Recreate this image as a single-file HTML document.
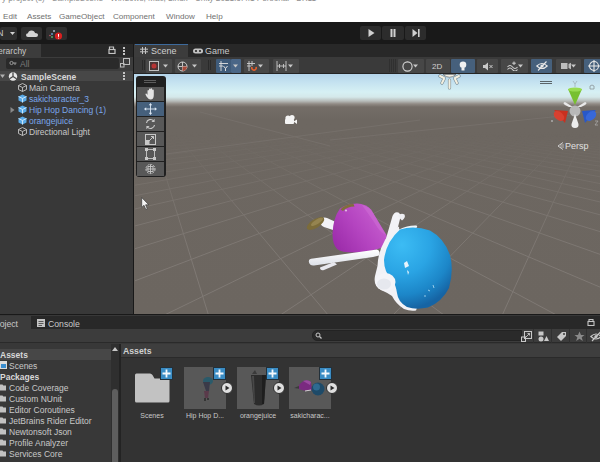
<!DOCTYPE html>
<html><head><meta charset="utf-8">
<style>
*{box-sizing:border-box;margin:0;padding:0}
html,body{width:600px;height:462px;overflow:hidden;background:#191919;font-family:"Liberation Sans",sans-serif;font-size:8.5px;color:#c4c4c4}
.a{position:absolute}
.t{position:absolute;white-space:nowrap;line-height:1}
#title{left:0;top:0;width:600px;height:10px;background:#fff}
#menu{left:0;top:10px;width:600px;height:12px;background:#fff}
#tb{left:0;top:22px;width:600px;height:22px;background:#191919}
.btn{position:absolute;background:#2e2e2e;border-radius:2px}
#hier{left:0;top:44px;width:133px;height:270px;background:#383838}
#scene{left:135px;top:44px;width:465px;height:270px;background:#383838}
#proj{left:0;top:315px;width:600px;height:147px;background:#383838}
</style></head><body>
<div id="title" class="a">
  <div class="t" style="left:2px;top:-5px;color:#909090;font-size:8.2px">y project (s) - SampleScene - Windows, Mac, Linux - Unity 2021.3.4f1 Personal &lt;DX11&gt;</div>
</div>
<div id="menu" class="a">
  <div class="t" style="left:3px;top:2.5px;color:#707070;font-size:8.1px">Edit</div>
  <div class="t" style="left:27px;top:2.5px;color:#707070;font-size:8.1px">Assets</div>
  <div class="t" style="left:59px;top:2.5px;color:#707070;font-size:8.1px">GameObject</div>
  <div class="t" style="left:113px;top:2.5px;color:#707070;font-size:8.1px">Component</div>
  <div class="t" style="left:166px;top:2.5px;color:#707070;font-size:8.1px">Window</div>
  <div class="t" style="left:206px;top:2.5px;color:#707070;font-size:8.1px">Help</div>
</div>
<div id="tb" class="a">
  <div class="btn" style="left:0;top:5px;width:17px;height:13px"></div>
  <div class="t" style="left:-3px;top:7px;color:#c8c8c8;font-size:9px">N</div>
  <svg class="a" style="left:10px;top:10px" width="5" height="3" viewBox="0 0 5 3"><path d="M0 0 H5 L2.5 3Z" fill="#d0d0d0"/></svg>
  <div class="btn" style="left:21px;top:5px;width:21px;height:13px"></div>
  <svg class="a" style="left:26px;top:8px" width="12" height="7" viewBox="0 0 12 7"><path d="M2 7 Q0 7 0 5 Q0 3.2 2 3.2 Q2.5 0.5 5.5 0.5 Q8.5 0.5 9 3 Q12 3 12 5 Q12 7 10 7Z" fill="#d4d4d4"/></svg>
  <div class="btn" style="left:46px;top:5px;width:21px;height:13px"></div>
  <svg class="a" style="left:49px;top:7px" width="14" height="11" viewBox="0 0 14 11"><circle cx="5" cy="2" r="1" fill="#a8b8c8"/><circle cx="3" cy="5" r="1" fill="#6898c8"/><circle cx="3" cy="8" r="1" fill="#58a868"/><circle cx="1" cy="6.5" r="0.8" fill="#c85868"/><circle cx="9.5" cy="7" r="3.6" fill="#d82020"/><path d="M9.5 5 V7.8 M9.5 8.8 V9.5" stroke="#fff" stroke-width="1"/></svg>
  <div class="btn" style="left:360px;top:4px;width:21px;height:14px;background:#2c2c2c"></div>
  <div class="btn" style="left:382px;top:4px;width:22px;height:14px;background:#2c2c2c"></div>
  <div class="btn" style="left:405px;top:4px;width:21px;height:14px;background:#2c2c2c"></div>
  <svg class="a" style="left:368px;top:7px" width="7" height="8" viewBox="0 0 7 8"><path d="M0.5 0 L6.5 4 L0.5 8Z" fill="#d0d0d0"/></svg>
  <svg class="a" style="left:390px;top:7px" width="6" height="8" viewBox="0 0 6 8"><rect x="0.5" y="0" width="2" height="8" fill="#d0d0d0"/><rect x="3.5" y="0" width="2" height="8" fill="#d0d0d0"/></svg>
  <svg class="a" style="left:412px;top:7px" width="8" height="8" viewBox="0 0 8 8"><path d="M0.5 0 L5.5 4 L0.5 8Z" fill="#d0d0d0"/><rect x="6" y="0" width="1.6" height="8" fill="#d0d0d0"/></svg>
</div>
<div id="hier" class="a">
  <div class="a" style="left:0;top:0;width:133px;height:13px;background:#282828"></div>
  <div class="a" style="left:0;top:0;width:41px;height:13px;background:#3c3c3c"></div>
  <div class="t" style="left:-10px;top:3px;color:#c8c8c8">Hierarchy</div>
  <svg class="a" style="left:108px;top:2px" width="8" height="8" viewBox="0 0 8 8"><path d="M1.5 3.5 V1 H5.5 V3.5" fill="none" stroke="#c4c4c4" stroke-width="1.2"/><rect x="1" y="3.5" width="6" height="4" fill="none" stroke="#c4c4c4" stroke-width="1.2"/></svg>
  <div class="a" style="left:123px;top:3px;width:2px;height:2px;background:#c4c4c4"></div>
  <div class="a" style="left:123px;top:6px;width:2px;height:2px;background:#c4c4c4"></div>
  <div class="a" style="left:123px;top:9px;width:2px;height:2px;background:#c4c4c4"></div>
  <div class="a" style="left:0;top:13px;width:133px;height:14px;background:#3c3c3c"></div>
  <div class="a" style="left:6px;top:14px;width:113px;height:11px;background:#2a2a2a;border-radius:2px"></div>
  <div class="t" style="left:20px;top:16px;color:#7a7a7a">All</div>
  <svg class="a" style="left:9px;top:16px" width="8" height="7" viewBox="0 0 8 7"><circle cx="2.5" cy="3" r="1.6" fill="none" stroke="#9a9a9a" stroke-width="1"/><path d="M4 3 H7.5 M6 3 V5" stroke="#9a9a9a" stroke-width="1"/></svg>
  <svg class="a" style="left:120px;top:14px" width="10" height="10" viewBox="0 0 10 10"><rect x="3.5" y="0.5" width="6" height="6" fill="none" stroke="#bdbdbd" stroke-width="1"/><rect x="0.5" y="5.5" width="3.5" height="3.5" fill="none" stroke="#bdbdbd" stroke-width="1"/></svg>
  <div class="a" style="left:0;top:27px;width:133px;height:10px;background:#474747"></div>
  <svg class="a" style="left:0px;top:30px" width="5" height="5" viewBox="0 0 5 5"><path d="M0 0.5 H5 L2.5 4 Z" fill="#b0b0b0"/></svg>
  <svg class="a" style="left:8px;top:28px" width="10" height="9" viewBox="0 0 10 9"><circle cx="5" cy="4.5" r="4.2" fill="#e8e8e8"/><path d="M5 4.5 L5 0.5 M5 4.5 L1.5 6.8 M5 4.5 L8.5 6.8" stroke="#474747" stroke-width="1.3"/></svg>
  <div class="t" style="left:21px;top:29px;color:#d8d8d8;font-weight:bold">SampleScene</div>
  <div class="a" style="left:123px;top:28px;width:2px;height:2px;background:#c4c4c4"></div>
  <div class="a" style="left:123px;top:31px;width:2px;height:2px;background:#c4c4c4"></div>
  <div class="a" style="left:123px;top:34px;width:2px;height:2px;background:#c4c4c4"></div>
<svg class="a" style="left:18px;top:39px" width="9" height="9" viewBox="0 0 9 9"><path d="M4.5 0.5 L8.5 2.5 V6.5 L4.5 8.5 L0.5 6.5 V2.5 Z M0.5 2.5 L4.5 4.5 L8.5 2.5 M4.5 4.5 V8.5" stroke="#c4c4c4" stroke-width="0.9" fill="none"/></svg>
  <div class="t" style="left:29px;top:40px;color:#c8c8c8">Main Camera</div>
<svg class="a" style="left:18px;top:50px" width="9" height="9" viewBox="0 0 9 9"><path d="M4.5 0.5 L8.5 2.5 V6.5 L4.5 8.5 L0.5 6.5 V2.5 Z" fill="#5aaae8"/><path d="M0.5 2.5 L4.5 4.5 L8.5 2.5 M4.5 4.5 V8.5" stroke="#d8ecfa" stroke-width="0.9" fill="none"/></svg>
  <div class="t" style="left:29px;top:51px;color:#7ba7ea">sakicharacter_3</div>
<svg class="a" style="left:18px;top:61px" width="9" height="9" viewBox="0 0 9 9"><path d="M4.5 0.5 L8.5 2.5 V6.5 L4.5 8.5 L0.5 6.5 V2.5 Z" fill="#5aaae8"/><path d="M0.5 2.5 L4.5 4.5 L8.5 2.5 M4.5 4.5 V8.5" stroke="#d8ecfa" stroke-width="0.9" fill="none"/></svg>
  <div class="t" style="left:29px;top:62px;color:#7ba7ea">Hip Hop Dancing (1)</div>
  <svg class="a" style="left:10px;top:63px" width="5" height="6" viewBox="0 0 5 6"><path d="M0.5 0 V6 L4.5 3 Z" fill="#8a8a8a"/></svg>
<svg class="a" style="left:18px;top:72px" width="9" height="9" viewBox="0 0 9 9"><path d="M4.5 0.5 L8.5 2.5 V6.5 L4.5 8.5 L0.5 6.5 V2.5 Z" fill="#5aaae8"/><path d="M0.5 2.5 L4.5 4.5 L8.5 2.5 M4.5 4.5 V8.5" stroke="#d8ecfa" stroke-width="0.9" fill="none"/></svg>
  <div class="t" style="left:29px;top:73px;color:#7ba7ea">orangejuice</div>
<svg class="a" style="left:18px;top:83px" width="9" height="9" viewBox="0 0 9 9"><path d="M4.5 0.5 L8.5 2.5 V6.5 L4.5 8.5 L0.5 6.5 V2.5 Z M0.5 2.5 L4.5 4.5 L8.5 2.5 M4.5 4.5 V8.5" stroke="#c4c4c4" stroke-width="0.9" fill="none"/></svg>
  <div class="t" style="left:29px;top:84px;color:#c8c8c8">Directional Light</div>
</div>
<div id="scene" class="a">
  <div class="a" style="left:0;top:0;width:465px;height:13px;background:#282828"></div>
  <div class="a" style="left:0;top:0;width:53px;height:13px;background:#3c3c3c;border-top:1px solid #3d6a9c"></div>
  <svg class="a" style="left:5px;top:3px" width="8" height="7" viewBox="0 0 8 7"><path d="M2.5 0 V7 M5.5 0 V7 M0 2.2 H8 M0 4.8 H8" stroke="#c4c4c4" stroke-width="1"/></svg>
  <div class="t" style="left:16px;top:3px;color:#d0d0d0;font-size:9px">Scene</div>
  <svg class="a" style="left:58px;top:4px" width="10" height="6" viewBox="0 0 10 6"><rect x="0" y="0.5" width="10" height="5" rx="2.5" fill="#c4c4c4"/><circle cx="3" cy="3" r="1.1" fill="#282828"/><circle cx="7" cy="3" r="1.1" fill="#282828"/></svg>
  <div class="t" style="left:70px;top:3px;color:#c8c8c8;font-size:9px">Game</div>
  <div class="a" style="left:0;top:13px;width:465px;height:17px;background:#3a3a3a;border-bottom:1px solid #242424"></div>
  <div class="a" style="left:7px;top:16px;width:1px;height:10px;background:#2a2a2a"></div>
  <div class="a" style="left:9px;top:16px;width:1px;height:10px;background:#2a2a2a"></div>
  <div class="a" style="left:73px;top:16px;width:1px;height:10px;background:#2a2a2a"></div>
  <div class="a" style="left:75px;top:16px;width:1px;height:10px;background:#2a2a2a"></div>
  <div class="a" style="left:254px;top:15px;width:1px;height:13px;background:#303030"></div>
  <div class="a" style="left:256px;top:15px;width:1px;height:13px;background:#303030"></div>
  <div class="a" style="left:258px;top:15px;width:1px;height:13px;background:#303030"></div>
  <div class="a" style="left:260px;top:15px;width:1px;height:13px;background:#303030"></div>
  <div class="a" style="left:11px;top:15px;width:26px;height:14px;background:#474747;border-radius:1px"></div>
  <div class="a" style="left:40px;top:15px;width:26px;height:14px;background:#474747;border-radius:1px"></div>
  <div class="a" style="left:81px;top:15px;width:15px;height:14px;background:#3f5b7a;border-radius:1px"></div>
  <div class="a" style="left:96px;top:15px;width:10px;height:14px;background:#4a6687;border-radius:1px"></div>
  <div class="a" style="left:109px;top:15px;width:25px;height:14px;background:#474747;border-radius:1px"></div>
  <div class="a" style="left:138px;top:15px;width:26px;height:14px;background:#474747;border-radius:1px"></div>
  <div class="a" style="left:263px;top:15px;width:26px;height:14px;background:#474747;border-radius:1px"></div>
  <div class="a" style="left:291px;top:15px;width:24px;height:14px;background:#474747;border-radius:1px"></div>
  <div class="a" style="left:316px;top:15px;width:24px;height:14px;background:#46607c;border-radius:1px"></div>
  <div class="a" style="left:342px;top:15px;width:21px;height:14px;background:#474747;border-radius:1px"></div>
  <div class="a" style="left:366px;top:15px;width:27px;height:14px;background:#474747;border-radius:1px"></div>
  <div class="a" style="left:396px;top:15px;width:21px;height:14px;background:#46607c;border-radius:1px"></div>
  <div class="a" style="left:421px;top:15px;width:25px;height:14px;background:#474747;border-radius:1px"></div>
  <div class="a" style="left:449px;top:15px;width:20px;height:14px;background:#46607c;border-radius:1px"></div>
  <svg class="a" style="left:14px;top:17px" width="10" height="10" viewBox="0 0 10 10"><rect x="0.5" y="0.5" width="9" height="9" fill="#4a3434" stroke="#c0c0c0" stroke-width="1"/><circle cx="5" cy="5" r="2.5" fill="#b83434"/></svg>
  <svg class="a" style="left:28px;top:20px" width="5" height="4" viewBox="0 0 5 4"><path d="M0 0.5 H5 L2.5 3.5 Z" fill="#c8c8c8"/></svg>
  <svg class="a" style="left:42px;top:17px" width="11" height="11" viewBox="0 0 11 11"><circle cx="5.5" cy="5.5" r="4.5" fill="none" stroke="#d0d0d0" stroke-width="1"/><path d="M1 5.5 H10 M5.5 1 V10" stroke="#d0d0d0" stroke-width="0.9"/><path d="M5.5 5.5 H10 A4.5 4.5 0 0 1 5.5 10 Z" fill="#a84a3a"/></svg>
  <svg class="a" style="left:57px;top:20px" width="5" height="4" viewBox="0 0 5 4"><path d="M0 0.5 H5 L2.5 3.5 Z" fill="#c8c8c8"/></svg>
  <svg class="a" style="left:84px;top:17px" width="9" height="10" viewBox="0 0 9 10"><path d="M2 0 V10 M0 2.5 H9 M0 5 H4" stroke="#e0e0e0" stroke-width="0.9"/><path d="M4.5 5 L6.5 7.5 L8.5 5 M6.5 7.5 V10" stroke="#e0e0e0" stroke-width="1" fill="none"/></svg>
  <svg class="a" style="left:98px;top:20px" width="5" height="4" viewBox="0 0 5 4"><path d="M0 0.5 H5 L2.5 3.5 Z" fill="#c8c8c8"/></svg>
  <svg class="a" style="left:112px;top:17px" width="10" height="10" viewBox="0 0 10 10"><path d="M2 0 V10 M5 0 V5 M0 2.5 H8 M0 5 H4" stroke="#d0d0d0" stroke-width="0.9"/><path d="M5 6 A2.2 2.2 0 1 0 9 6 " stroke="#e8602c" stroke-width="1.6" fill="none"/></svg>
  <svg class="a" style="left:123px;top:20px" width="5" height="4" viewBox="0 0 5 4"><path d="M0 0.5 H5 L2.5 3.5 Z" fill="#c8c8c8"/></svg>
  <svg class="a" style="left:141px;top:17px" width="11" height="10" viewBox="0 0 11 10"><path d="M1 0 V10 M10 0 V10 M1 5 H10 M3.5 3 V7 M7.5 3 V7" stroke="#c8c8c8" stroke-width="0.9"/></svg>
  <svg class="a" style="left:153px;top:20px" width="5" height="4" viewBox="0 0 5 4"><path d="M0 0.5 H5 L2.5 3.5 Z" fill="#c8c8c8"/></svg>
  <svg class="a" style="left:267px;top:17px" width="11" height="11" viewBox="0 0 11 11"><circle cx="5.5" cy="5.5" r="4.6" fill="none" stroke="#d8d8d8" stroke-width="1.1"/><path d="M8.2 2 A4.6 4.6 0 0 1 2 9 A4.2 4.2 0 0 0 8.2 2Z" fill="#d8d8d8"/></svg>
  <svg class="a" style="left:278px;top:20px" width="5" height="4" viewBox="0 0 5 4"><path d="M0 0.5 H5 L2.5 3.5 Z" fill="#c8c8c8"/></svg>
  <div class="t" style="left:297px;top:19px;color:#d0d0d0;font-size:8px">2D</div>
  <svg class="a" style="left:324px;top:17px" width="8" height="10" viewBox="0 0 8 10"><circle cx="4" cy="3.8" r="3.3" fill="#f0f0f0"/><rect x="2.5" y="6.5" width="3" height="3" fill="#f0f0f0"/></svg>
  <svg class="a" style="left:348px;top:18px" width="10" height="9" viewBox="0 0 10 9"><path d="M0 3 H2 L5 0.5 V8.5 L2 6 H0Z" fill="#c8c8c8"/><path d="M6.5 3 L9.5 6 M9.5 3 L6.5 6" stroke="#c8c8c8" stroke-width="1"/></svg>
  <svg class="a" style="left:372px;top:17px" width="11" height="10" viewBox="0 0 11 10"><path d="M0.5 6 Q3 3 5.5 6 T10.5 6 M0.5 8.5 Q3 5.5 5.5 8.5 T10.5 8.5" stroke="#d0d0d0" stroke-width="1.1" fill="none"/><path d="M7 0.5 V4 M5.2 2.2 H8.8" stroke="#d0d0d0" stroke-width="1"/></svg>
  <svg class="a" style="left:383px;top:20px" width="5" height="4" viewBox="0 0 5 4"><path d="M0 0.5 H5 L2.5 3.5 Z" fill="#c8c8c8"/></svg>
  <svg class="a" style="left:401px;top:17px" width="12" height="10" viewBox="0 0 12 10"><path d="M0.8 5 Q6 0 11.2 5 Q6 10 0.8 5Z" fill="none" stroke="#e8e8e8" stroke-width="1.1"/><circle cx="6" cy="5" r="1.6" fill="#e8e8e8"/><path d="M2 9.5 L10.5 0.5" stroke="#e8e8e8" stroke-width="1.1"/></svg>
  <svg class="a" style="left:426px;top:18px" width="10" height="8" viewBox="0 0 10 8"><rect x="0" y="1" width="6.5" height="6" fill="#bcbcbc"/><path d="M7.5 2 L10 0.8 V7.2 L7.5 6Z" fill="#bcbcbc"/></svg>
  <svg class="a" style="left:436px;top:20px" width="5" height="4" viewBox="0 0 5 4"><path d="M0 0.5 H5 L2.5 3.5 Z" fill="#c8c8c8"/></svg>
  <svg class="a" style="left:453px;top:16px" width="12" height="12" viewBox="0 0 12 12"><circle cx="6" cy="6" r="4.5" fill="none" stroke="#e8e8e8" stroke-width="1.1"/><path d="M6 0 V12 M0 6 H12" stroke="#e8e8e8" stroke-width="1.1"/></svg>
  <div class="a" style="left:0;top:30px;width:465px;height:240px;background:linear-gradient(to bottom,#b4d4ea 0px,#c4e2f0 8px,#d6f0f4 18px,#d4e8ea 23px,#b8bcba 27px,#908a84 30px,#746d67 33px,#6d6761 45px,#6c6660 240px)"></div>
<svg class="a" style="left:-135px;top:-44px" width="600" height="462" viewBox="0 0 600 462">
<defs><linearGradient id="gf" x1="0" y1="100" x2="0" y2="314" gradientUnits="userSpaceOnUse"><stop offset="0" stop-color="#fff" stop-opacity="0"/><stop offset="0.16" stop-color="#fff" stop-opacity="0"/><stop offset="0.3" stop-color="#fff" stop-opacity="0.3"/><stop offset="0.51" stop-color="#fff" stop-opacity="0.75"/><stop offset="0.75" stop-color="#fff" stop-opacity="1"/><stop offset="1" stop-color="#fff" stop-opacity="1"/></linearGradient>
<mask id="gm"><rect x="135" y="100" width="465" height="214" fill="url(#gf)"/></mask>
<clipPath id="gc"><rect x="135" y="100" width="465" height="214"/></clipPath></defs>
<g clip-path="url(#gc)" mask="url(#gm)" stroke="#7f7974" stroke-width="1" fill="none"><line x1="-8.0" y1="695.3" x2="137.1" y2="103.0"/><line x1="324.4" y1="691.6" x2="143.2" y2="103.0"/><line x1="650.9" y1="697.7" x2="149.3" y2="103.0"/><line x1="889.6" y1="641.9" x2="155.1" y2="103.1"/><line x1="895.3" y1="496.5" x2="160.8" y2="103.1"/><line x1="628.3" y1="689.7" x2="597.9" y2="114.5"/><line x1="898.5" y1="413.8" x2="166.4" y2="103.1"/><line x1="332.3" y1="690.8" x2="593.1" y2="114.3"/><line x1="895.5" y1="358.7" x2="171.8" y2="103.1"/><line x1="26.4" y1="691.9" x2="588.4" y2="114.1"/><line x1="897.7" y1="322.0" x2="177.1" y2="103.2"/><line x1="-289.7" y1="693.1" x2="583.8" y2="113.8"/><line x1="899.3" y1="294.8" x2="182.3" y2="103.2"/><line x1="-296.2" y1="538.7" x2="579.3" y2="113.6"/><line x1="897.2" y1="273.1" x2="187.3" y2="103.2"/><line x1="-290.2" y1="442.6" x2="574.9" y2="113.4"/><line x1="898.6" y1="256.7" x2="192.2" y2="103.2"/><line x1="-294.4" y1="382.3" x2="570.6" y2="113.2"/><line x1="899.7" y1="243.4" x2="197.0" y2="103.2"/><line x1="-297.4" y1="339.1" x2="566.4" y2="113.0"/><line x1="898.1" y1="231.8" x2="201.7" y2="103.3"/><line x1="-299.6" y1="306.7" x2="562.2" y2="112.8"/><line x1="899.0" y1="222.6" x2="206.3" y2="103.3"/><line x1="-295.9" y1="280.4" x2="558.1" y2="112.6"/><line x1="899.8" y1="214.7" x2="210.8" y2="103.3"/><line x1="-297.8" y1="260.4" x2="554.1" y2="112.4"/><line x1="898.6" y1="207.5" x2="215.1" y2="103.3"/><line x1="-299.4" y1="244.1" x2="550.2" y2="112.2"/><line x1="899.3" y1="201.6" x2="219.4" y2="103.3"/><line x1="-296.7" y1="229.8" x2="546.4" y2="112.0"/><line x1="900.0" y1="196.3" x2="223.6" y2="103.3"/><line x1="-298.1" y1="218.3" x2="542.6" y2="111.8"/><line x1="898.9" y1="191.5" x2="227.7" y2="103.4"/><line x1="-299.3" y1="208.5" x2="538.9" y2="111.6"/><line x1="899.5" y1="187.4" x2="231.7" y2="103.4"/><line x1="-297.1" y1="199.6" x2="535.3" y2="111.4"/><line x1="898.6" y1="183.5" x2="235.6" y2="103.4"/><line x1="-298.3" y1="192.1" x2="531.7" y2="111.2"/><line x1="899.2" y1="180.1" x2="239.4" y2="103.4"/><line x1="-299.3" y1="185.5" x2="528.2" y2="111.1"/><line x1="899.7" y1="177.1" x2="243.2" y2="103.4"/><line x1="-297.4" y1="179.5" x2="524.7" y2="110.9"/><line x1="898.9" y1="174.2" x2="246.8" y2="103.4"/><line x1="-298.4" y1="174.2" x2="521.3" y2="110.7"/><line x1="899.3" y1="171.6" x2="250.4" y2="103.4"/><line x1="-299.2" y1="169.5" x2="518.0" y2="110.6"/><line x1="899.8" y1="169.3" x2="253.9" y2="103.5"/><line x1="-300.0" y1="165.3" x2="514.7" y2="110.4"/><line x1="899.1" y1="167.1" x2="257.4" y2="103.5"/><line x1="-298.4" y1="161.2" x2="511.5" y2="110.2"/><line x1="899.5" y1="165.1" x2="260.8" y2="103.5"/><line x1="-299.2" y1="157.7" x2="508.4" y2="110.1"/><line x1="899.8" y1="163.2" x2="264.1" y2="103.5"/><line x1="-299.8" y1="154.5" x2="505.3" y2="109.9"/><line x1="899.2" y1="161.4" x2="267.4" y2="103.5"/><line x1="-298.5" y1="151.4" x2="502.2" y2="109.8"/><line x1="899.6" y1="159.9" x2="270.5" y2="103.5"/><line x1="-299.1" y1="148.6" x2="499.2" y2="109.6"/><line x1="899.9" y1="158.4" x2="273.7" y2="103.5"/><line x1="-299.7" y1="146.1" x2="496.3" y2="109.5"/><line x1="899.3" y1="156.9" x2="276.7" y2="103.6"/><line x1="-298.5" y1="143.6" x2="493.4" y2="109.3"/><line x1="899.7" y1="155.6" x2="279.8" y2="103.6"/><line x1="-299.1" y1="141.4" x2="490.5" y2="109.2"/><line x1="900.0" y1="154.4" x2="282.7" y2="103.6"/><line x1="-299.7" y1="139.4" x2="487.7" y2="109.1"/><line x1="899.4" y1="153.1" x2="285.6" y2="103.6"/><line x1="-298.6" y1="137.4" x2="484.9" y2="108.9"/><line x1="899.7" y1="152.0" x2="288.5" y2="103.6"/><line x1="-299.1" y1="135.6" x2="482.2" y2="108.8"/><line x1="899.2" y1="150.9" x2="291.3" y2="103.6"/><line x1="-299.6" y1="133.9" x2="479.5" y2="108.7"/><line x1="899.5" y1="150.0" x2="294.0" y2="103.6"/><line x1="-298.6" y1="132.2" x2="476.9" y2="108.5"/><line x1="899.8" y1="149.0" x2="296.7" y2="103.6"/><line x1="-299.1" y1="130.7" x2="474.3" y2="108.4"/><line x1="899.3" y1="148.1" x2="299.4" y2="103.6"/><line x1="-299.5" y1="129.3" x2="471.7" y2="108.3"/><line x1="899.6" y1="147.3" x2="302.0" y2="103.7"/><line x1="-300.0" y1="128.0" x2="469.2" y2="108.1"/><line x1="899.8" y1="146.5" x2="304.5" y2="103.7"/><line x1="-299.1" y1="126.7" x2="466.7" y2="108.0"/><line x1="899.4" y1="145.7" x2="307.0" y2="103.7"/><line x1="-299.5" y1="125.5" x2="464.3" y2="107.9"/><line x1="899.7" y1="144.9" x2="309.5" y2="103.7"/><line x1="-299.9" y1="124.3" x2="461.9" y2="107.8"/><line x1="899.9" y1="144.3" x2="311.9" y2="103.7"/><line x1="-299.1" y1="123.2" x2="459.5" y2="107.7"/><line x1="899.5" y1="143.5" x2="314.3" y2="103.7"/><line x1="-299.4" y1="122.2" x2="457.2" y2="107.5"/></g>
<g stroke="#78726d" stroke-width="1" fill="none" clip-path="url(#gc)" opacity="0.8"><line x1="136" y1="158" x2="420" y2="120"/><line x1="200" y1="112" x2="330" y2="146"/><line x1="330" y1="140" x2="600" y2="112"/></g>
</svg>

<svg class="a" style="left:-135px;top:-44px" width="600" height="462" viewBox="0 0 600 462">
<defs>
<radialGradient id="hb" cx="402" cy="245" r="64" gradientUnits="userSpaceOnUse"><stop offset="0" stop-color="#3cbcf4"/><stop offset="0.45" stop-color="#2aa4e4"/><stop offset="0.78" stop-color="#1c86c8"/><stop offset="1" stop-color="#1664a4"/></radialGradient>
<linearGradient id="mg" x1="335" y1="250" x2="385" y2="215" gradientUnits="userSpaceOnUse"><stop offset="0" stop-color="#9a2aa8"/><stop offset="0.5" stop-color="#b444c0"/><stop offset="1" stop-color="#c860d0"/></linearGradient>
<linearGradient id="wg" x1="0" y1="250" x2="0" y2="268" gradientUnits="userSpaceOnUse"><stop offset="0" stop-color="#ffffff"/><stop offset="1" stop-color="#d8dce4"/></linearGradient>
</defs>
<!-- leg 1 -->
<path d="M322 218.5 Q324 217 327 218 L338 223 L336 231 L324 227 Q320 225 320.5 222Z" fill="#f2f2f6"/>
<!-- shoe 1 -->
<ellipse cx="315.5" cy="223.5" rx="10" ry="4.3" transform="rotate(-32 315.5 223.5)" fill="#7c6c3a"/>
<ellipse cx="317" cy="221.8" rx="7" ry="2.2" transform="rotate(-32 317 221.8)" fill="#958450"/>
<!-- dress -->
<path d="M340 208.5 Q347 204 357 203.5 Q366 204 371 209.5 L386.5 235 Q389 242 381 248 Q370 252 355 252.5 Q341 252.5 337 249 Q332.5 244 332.5 234 Q333 218 340 208.5Z" fill="url(#mg)"/>
<path d="M362 205 Q368 206 372 211 L386 235 Q380 233 374 222Z" fill="#cf70d6" opacity="0.5"/>
<path d="M340.5 209.5 Q345 204 353.5 204 L354.5 206.5 Q347 206.5 343 211Z" fill="#7f6e3c"/>
<circle cx="346" cy="210.5" r="1.1" fill="#e0b8e0"/>
<!-- upper arm -->
<path d="M385 242 L392.5 216 Q394.5 211 398.5 212.5 Q401.5 214.5 400 219 L394 243Z" fill="#f2f2f6"/>
<path d="M397.5 216 Q401 212.5 404.5 214.5 Q406 217.5 402 220.5 Z" fill="#eeeef2"/>
<!-- long arm -->
<path d="M309 262.5 Q308 258.5 313 258.5 L377 249.5 Q381 251 379 255.5 L373 257 L314 265.5 Q310 266 309 262.5Z" fill="url(#wg)"/>
<path d="M320 267.5 L334 262 L337 264.5 L324 270 Q320 271 320 267.5Z" fill="#e8e8ee"/>
<!-- head white -->
<path d="M399 226.5 Q390 232 385 240 Q378 252 377.5 266 Q376 272 375 276 Q373 286 381 290 Q388 293 392 296 Q396 304 404 309 Q410 311.5 416 310.5 L420 300 L400 240Z" fill="#f2f2f6"/>
<path d="M384.5 258 Q386 242 399.5 230.5 Q408 226.5 416 226.8" fill="none" stroke="#eef4f8" stroke-width="2.4" stroke-linecap="round"/>
<!-- blue -->
<path d="M400 229.5 Q414 225 430 230.5 Q444 238 450 255 Q454 270 449 288 Q442 302 428 307.5 Q416 310 407 307 Q398 302 397 293 Q396 285 392 280 Q384 272 384 260 Q386 242 400 229.5Z" fill="url(#hb)"/>
<!-- snout -->
<ellipse cx="385.5" cy="282" rx="10" ry="9" fill="#f4f4f8"/>
<ellipse cx="384" cy="284" rx="7" ry="5.5" fill="#e6e8ee"/>
<path d="M404 263 L407 261 L409 266 L405 268Z M407 270 L409 272 L408 275Z" fill="#e8f4fc"/>
<path d="M428 290 L430 291 M424 296 L426 296 M433 285 L434 288" stroke="#b8e0f4" stroke-width="0.8"/>
</svg>

<div class="a" style="left:1px;top:32px;width:30px;height:101px;background:#202020;border-radius:3px"></div>
<div class="a" style="left:9px;top:36px;width:12px;height:1px;background:#5c5c5c"></div>
<div class="a" style="left:9px;top:38px;width:12px;height:1px;background:#5c5c5c"></div>
<div class="a" style="left:2px;top:43px;width:27px;height:14px;background:#585858"></div>
<div class="a" style="left:2px;top:58px;width:27px;height:14px;background:#46607c"></div>
<div class="a" style="left:2px;top:73px;width:27px;height:14px;background:#585858"></div>
<div class="a" style="left:2px;top:88px;width:27px;height:14px;background:#585858"></div>
<div class="a" style="left:2px;top:103px;width:27px;height:14px;background:#585858"></div>
<div class="a" style="left:2px;top:118px;width:27px;height:14px;background:#585858"></div>
<svg class="a" style="left:10px;top:44px" width="11" height="12" viewBox="0 0 11 12"><path d="M2.5 7 V3 Q2.5 2 3.3 2 Q4 2 4 3 V1.5 Q4 0.5 4.8 0.5 Q5.6 0.5 5.6 1.5 V1.2 Q5.6 0.3 6.4 0.3 Q7.2 0.3 7.2 1.2 V2.2 Q7.2 1.4 8 1.4 Q8.8 1.4 8.8 2.4 V7 Q8.8 11.5 5.5 11.5 Q3.5 11.5 1.5 8.5 L0.5 6.5 Q0.3 5.5 1.2 5.5 Q2 5.6 2.5 7Z" fill="#e4e4e4"/></svg>
<svg class="a" style="left:9px;top:59px" width="13" height="12" viewBox="0 0 13 12"><path d="M6.5 1.5 V10.5 M1.5 6 H11.5" stroke="#dde8f4" stroke-width="0.9"/><path d="M6.5 0 L8.2 2.2 H4.8Z M6.5 12 L8.2 9.8 H4.8Z M0 6 L2.2 4.3 V7.7Z M13 6 L10.8 4.3 V7.7Z" fill="#dde8f4"/></svg>
<svg class="a" style="left:10px;top:74px" width="11" height="12" viewBox="0 0 11 12"><path d="M8.6 3 A4 4 0 0 0 1.5 5" fill="none" stroke="#c8c8c8" stroke-width="1.1"/><path d="M2.4 9 A4 4 0 0 0 9.5 7" fill="none" stroke="#c8c8c8" stroke-width="1.1"/><path d="M9.6 0.8 V4 H6.4Z M1.4 11.2 V8 H4.6Z" fill="#c8c8c8"/></svg>
<svg class="a" style="left:10px;top:89px" width="11" height="12" viewBox="0 0 11 12"><rect x="0.5" y="1.5" width="10" height="10" fill="none" stroke="#c8c8c8" stroke-width="1"/><rect x="0.5" y="7" width="4" height="4.5" fill="#c8c8c8"/><path d="M4 8 L8.5 3.5 M6 3.5 H8.5 V6" stroke="#c8c8c8" stroke-width="1" fill="none"/></svg>
<svg class="a" style="left:10px;top:104px" width="11" height="12" viewBox="0 0 11 12"><rect x="1.5" y="1.5" width="8" height="9" fill="none" stroke="#c8c8c8" stroke-width="0.9"/><rect x="0" y="0" width="3" height="3" fill="#c8c8c8"/><rect x="8" y="0" width="3" height="3" fill="#c8c8c8"/><rect x="0" y="9" width="3" height="3" fill="#c8c8c8"/><rect x="8" y="9" width="3" height="3" fill="#c8c8c8"/></svg>
<svg class="a" style="left:9px;top:119px" width="13" height="12" viewBox="0 0 13 12"><circle cx="6.5" cy="6" r="4.6" fill="none" stroke="#c8c8c8" stroke-width="0.9" stroke-dasharray="2 1"/><path d="M6.5 1.5 V10.5 M2 6 H11" stroke="#c8c8c8" stroke-width="0.9"/><rect x="4" y="3.5" width="5" height="5" fill="none" stroke="#c8c8c8" stroke-width="0.9"/></svg>
<svg class="a" style="left:302px;top:30px" width="25" height="16" viewBox="0 0 25 16"><g stroke="#3c4448" stroke-width="3.2" stroke-linecap="round" opacity="0.55"><path d="M12.5 6 V14 M7 5 L5 9 M18 5 L20 9 M3 2 L7 4 M22 2 L18 4"/></g><path d="M6 0.5 Q12.5 6 19 0.5Z" fill="#f4f0e4" stroke="#555" stroke-width="0.6"/><g stroke="#f4f0e0" stroke-width="2" stroke-linecap="round"><path d="M12.5 6 V14 M7 5 L5 9 M18 5 L20 9 M3 2 L7 4 M22 2 L18 4"/></g></svg>
<svg class="a" style="left:148px;top:70px" width="14" height="11" viewBox="0 0 14 11"><circle cx="5" cy="4" r="2.6" fill="#f4f4f4"/><circle cx="9" cy="3.5" r="2.6" fill="#f4f4f4"/><rect x="2" y="5" width="9" height="5" rx="1" fill="#f4f4f4"/><path d="M10.5 7.5 L14 5.5 V10 Z" fill="#f4f4f4"/></svg>
<svg class="a" style="left:400px;top:32px" width="65" height="80" viewBox="0 0 65 80">
<path d="M5 5.5 H17 M5 7.5 H17" stroke="#5a6468" stroke-width="1"/>
<text x="7" y="0" />
<path d="M38 5 L40 8 L42 5 M40 8 V11" stroke="#a0b0b8" stroke-width="0.8" fill="none"/>
<path d="M55 10 Q57 8 59 10 V13 H55Z" fill="none" stroke="#8a9498" stroke-width="0.8"/>
<path d="M33 13 L47 13 L40 29Z" fill="#78c030"/>
<ellipse cx="40" cy="13.5" rx="7" ry="2" fill="#98dc50"/>
<path d="M34 31 L30 29 Q27 27 30 26 L38 31Z" fill="#e8e8e8"/>
<path d="M46 31 L50 29 Q53 27 50 26 L42 31Z" fill="#e8e8e8"/>
<circle cx="40" cy="35" r="5.5" fill="#b8b8b8"/>
<path d="M19 34 L33 35 L30 47Z" fill="#c83020"/>
<ellipse cx="24" cy="40" rx="4" ry="6" transform="rotate(-50 24 40)" fill="#d84030"/>
<path d="M61 34 L47 35 L50 47Z" fill="#2858c8"/>
<ellipse cx="56" cy="40" rx="4" ry="6" transform="rotate(50 56 40)" fill="#3868d8"/>
<path d="M40 38 L43.5 48 Q44 52 40 52 Q36 52 36.5 48Z" fill="#ececec"/>
<path d="M16 46 L18 44 M16 44 L18 46" stroke="#b0b0b0" stroke-width="0.7"/>
<path d="M60 45 H63 L60 49 H63" stroke="#b0b0b0" stroke-width="0.7" fill="none"/>
</svg>
<svg class="a" style="left:422px;top:98px" width="7" height="8" viewBox="0 0 7 8"><path d="M6 0.5 L1 4 L6 7.5" stroke="#d8d8d8" stroke-width="0.9" fill="none"/><path d="M3 3 H7 M3 5 H7" stroke="#d8d8d8" stroke-width="0.7"/></svg>
<div class="t" style="left:430px;top:98px;color:#e0e0e0;font-size:9px">Persp</div>
<svg class="a" style="left:6px;top:153px" width="9" height="14" viewBox="0 0 9 14"><path d="M0.7 0.5 V10.5 L3 8.3 L4.8 12.5 L6.3 11.8 L4.6 7.8 L7.8 7.8Z" fill="#f4f4f4" stroke="#3a3a3a" stroke-width="0.7"/></svg>

</div>
<div class="a" style="left:134px;top:44px;width:1px;height:13px;background:#3c3c3c"></div>
<div class="a" style="left:134px;top:57px;width:1px;height:17px;background:#3a3a3a;border-bottom:1px solid #242424"></div>
<div class="a" style="left:134px;top:74px;width:1px;height:240px;background:linear-gradient(to bottom,#b4d4ea 0px,#c4e2f0 8px,#d6f0f4 18px,#d4e8ea 23px,#b8bcba 27px,#908a84 30px,#746d67 33px,#6d6761 45px,#6c6660 240px)"></div>
<div id="proj" class="a">
<div class="a" style="left:0;top:1px;width:600px;height:13px;background:#282828"></div>
<div class="a" style="left:0;top:1px;width:31px;height:13px;background:#3c3c3c"></div>
<div class="t" style="left:-9px;top:5px;color:#c8c8c8;font-size:8.7px">Project</div>
<svg class="a" style="left:37px;top:4px" width="8" height="8" viewBox="0 0 8 8"><rect x="0" y="0" width="8" height="8" fill="#c4c4c4"/><path d="M1.5 2.5 H6.5 M1.5 4.5 H6.5 M1.5 6.5 H5" stroke="#3c3c3c" stroke-width="0.8"/></svg>
<div class="t" style="left:48px;top:5px;color:#c8c8c8;font-size:8.7px">Console</div>
<svg class="a" style="left:587px;top:3px" width="8" height="8" viewBox="0 0 8 8"><path d="M2 3.5 V1.5 H6 V3.5" fill="none" stroke="#c4c4c4" stroke-width="1.1"/><rect x="1" y="3.5" width="6" height="4" fill="none" stroke="#c4c4c4" stroke-width="1.1"/></svg>
<div class="a" style="left:0;top:14px;width:600px;height:14px;background:#3c3c3c;border-bottom:1px solid #2a2a2a"></div>
<div class="a" style="left:312px;top:15px;width:210px;height:11px;background:#2a2a2a;border-radius:5px 0 0 5px;border:1px solid #232323"></div>
<svg class="a" style="left:315px;top:17px" width="7" height="7" viewBox="0 0 7 7"><circle cx="3" cy="3" r="2" fill="none" stroke="#c8c8c8" stroke-width="1"/><path d="M4.5 4.5 L6.5 6.5" stroke="#c8c8c8" stroke-width="1.2"/></svg>
<div class="a" style="left:521px;top:16px"><svg width="11" height="11" viewBox="0 0 11 11"><rect x="3.5" y="0.5" width="7" height="7" fill="none" stroke="#c8c8c8" stroke-width="1"/><rect x="0.5" y="6" width="4" height="4.5" fill="none" stroke="#c8c8c8" stroke-width="1"/><path d="M5 6 L8.5 2.5 M6.5 2.5 H8.5 V4.5" stroke="#c8c8c8" stroke-width="0.9" fill="none"/></svg></div>
<div class="a" style="left:538px;top:16px"><svg width="11" height="11" viewBox="0 0 11 11"><rect x="0.5" y="0.5" width="5" height="4" fill="#c8c8c8"/><circle cx="3" cy="8" r="2.5" fill="#c8c8c8"/><path d="M6 10 L8.5 5 L11 10Z" fill="#c8c8c8"/></svg></div>
<div class="a" style="left:556px;top:16px"><svg width="11" height="11" viewBox="0 0 11 11"><path d="M1 6 L6 1 H10 V5 L5 10Z" fill="#c8c8c8"/><circle cx="8" cy="3" r="1" fill="#3c3c3c"/></svg></div>
<div class="a" style="left:574px;top:16px"><svg width="11" height="11" viewBox="0 0 11 11"><path d="M5.5 0.5 L7 4 H10.5 L7.7 6.3 L8.8 10 L5.5 7.8 L2.2 10 L3.3 6.3 L0.5 4 H4Z" fill="#8a8a8a"/></svg></div>
<div class="a" style="left:590px;top:16px"><svg width="12" height="11" viewBox="0 0 12 11"><path d="M0.8 5.5 Q6 0.5 11.2 5.5 Q6 10.5 0.8 5.5Z" fill="none" stroke="#c8c8c8" stroke-width="1.1"/><circle cx="6" cy="5.5" r="1.6" fill="#c8c8c8"/><path d="M2 10 L10.5 1" stroke="#c8c8c8" stroke-width="1.1"/></svg></div>
<div class="a" style="left:533px;top:14px;width:1px;height:14px;background:#303030"></div>
<div class="a" style="left:551px;top:14px;width:1px;height:14px;background:#303030"></div>
<div class="a" style="left:569px;top:14px;width:1px;height:14px;background:#303030"></div>
<div class="a" style="left:586px;top:14px;width:1px;height:14px;background:#303030"></div>
<div class="a" style="left:0;top:29px;width:111px;height:118px;background:#383838"></div>
<div class="a" style="left:0;top:34px;width:111px;height:11px;background:#474747"></div>
<div class="t" style="left:0px;top:36px;color:#d8d8d8;font-weight:bold;font-size:8.5px">Assets</div>
<svg class="a" style="left:0px;top:46px" width="7" height="8" viewBox="0 0 7 8"><rect x="0" y="0" width="7" height="8" fill="#dcdcdc"/><rect x="1" y="3" width="5" height="4" fill="#3a8ed0"/></svg>
<div class="t" style="left:9px;top:47px;color:#c8c8c8;font-size:8.5px">Scenes</div>
<div class="t" style="left:0px;top:58px;color:#d8d8d8;font-weight:bold;font-size:8.5px">Packages</div>
<svg class="a" style="left:0px;top:69px" width="6" height="7" viewBox="0 0 6 7"><path d="M0 0.5 H2.5 L3.3 1.5 H6 V6.5 H0Z" fill="#c2c2c2"/></svg>
<div class="t" style="left:9px;top:69px;color:#c8c8c8;font-size:8.5px">Code Coverage</div>
<svg class="a" style="left:0px;top:80px" width="6" height="7" viewBox="0 0 6 7"><path d="M0 0.5 H2.5 L3.3 1.5 H6 V6.5 H0Z" fill="#c2c2c2"/></svg>
<div class="t" style="left:9px;top:80px;color:#c8c8c8;font-size:8.5px">Custom NUnit</div>
<svg class="a" style="left:0px;top:91px" width="6" height="7" viewBox="0 0 6 7"><path d="M0 0.5 H2.5 L3.3 1.5 H6 V6.5 H0Z" fill="#c2c2c2"/></svg>
<div class="t" style="left:9px;top:91px;color:#c8c8c8;font-size:8.5px">Editor Coroutines</div>
<svg class="a" style="left:0px;top:102px" width="6" height="7" viewBox="0 0 6 7"><path d="M0 0.5 H2.5 L3.3 1.5 H6 V6.5 H0Z" fill="#c2c2c2"/></svg>
<div class="t" style="left:9px;top:102px;color:#c8c8c8;font-size:8.5px">JetBrains Rider Editor</div>
<svg class="a" style="left:0px;top:113px" width="6" height="7" viewBox="0 0 6 7"><path d="M0 0.5 H2.5 L3.3 1.5 H6 V6.5 H0Z" fill="#c2c2c2"/></svg>
<div class="t" style="left:9px;top:113px;color:#c8c8c8;font-size:8.5px">Newtonsoft Json</div>
<svg class="a" style="left:0px;top:124px" width="6" height="7" viewBox="0 0 6 7"><path d="M0 0.5 H2.5 L3.3 1.5 H6 V6.5 H0Z" fill="#c2c2c2"/></svg>
<div class="t" style="left:9px;top:124px;color:#c8c8c8;font-size:8.5px">Profile Analyzer</div>
<svg class="a" style="left:0px;top:135px" width="6" height="7" viewBox="0 0 6 7"><path d="M0 0.5 H2.5 L3.3 1.5 H6 V6.5 H0Z" fill="#c2c2c2"/></svg>
<div class="t" style="left:9px;top:135px;color:#c8c8c8;font-size:8.5px">Services Core</div>
<div class="a" style="left:111px;top:29px;width:8px;height:118px;background:#2f2f2f"></div>
<svg class="a" style="left:112px;top:32px" width="6" height="4" viewBox="0 0 6 4"><path d="M0 4 L3 0 L6 4Z" fill="#c8c8c8"/></svg>
<div class="a" style="left:112px;top:74px;width:6px;height:80px;background:#5e5e5e;border-radius:3px"></div>
<div class="a" style="left:119px;top:29px;width:2px;height:118px;background:#232323"></div>
<div class="a" style="left:121px;top:29px;width:479px;height:118px;background:#333333"></div>
<div class="a" style="left:121px;top:29px;width:479px;height:14px;background:#3e3e3e;border-bottom:1px solid #2a2a2a"></div>
<div class="t" style="left:123px;top:32px;color:#d0d0d0;font-weight:bold;font-size:8.7px">Assets</div>
<svg class="a" style="left:135px;top:58px" width="35" height="30" viewBox="0 0 35 30"><path d="M0 2 Q0 0.5 1.5 0.5 H15 Q16.5 0.5 17.5 2 L19.5 5.5 H33 Q34.5 5.5 34.5 7 V28 Q34.5 29.5 33 29.5 H1.5 Q0 29.5 0 28Z" fill="#c2c2c2"/></svg>
<div class="a" style="left:160px;top:52px;width:13px;height:13px;background:#3a8cc4;border:1px solid #22303a"><svg class="a" style="left:1px;top:1px" width="9" height="9" viewBox="0 0 9 9"><path d="M4.5 0.5 V8.5 M0.5 4.5 H8.5" stroke="#f4f8fc" stroke-width="1.8"/></svg></div>
<div class="a" style="left:184px;top:52px;width:42px;height:42px;background:#585858"></div>
<div class="a" style="left:237px;top:52px;width:42px;height:42px;background:#585858"></div>
<div class="a" style="left:289px;top:52px;width:42px;height:42px;background:#585858"></div>
<svg class="a" style="left:184px;top:52px" width="42" height="42" viewBox="0 0 42 42">
<ellipse cx="24" cy="14" rx="5" ry="4" fill="#2a5a6a"/><path d="M19 15 L22 24 L25 24 L26 15Z" fill="#3a3a48"/><path d="M20 24 L21 31 L24 31 L25 24Z" fill="#5a3a4a"/><path d="M21 31 V34 M24 31 V33" stroke="#2a2a2a" stroke-width="1.5"/>
</svg>
<svg class="a" style="left:237px;top:52px" width="42" height="42" viewBox="0 0 42 42">
<path d="M15 7 L18 3 L20 7Z" fill="#3a3a3a"/><path d="M14 8 L29 8 L27 37 Q22 40 17 37Z" fill="#2c2c2c"/><path d="M25 8 L29 8 L27 37 L25 37Z" fill="#1e1e1e"/><path d="M15 9 L17 9 L18 36 L17 36Z" fill="#484848"/>
</svg>
<svg class="a" style="left:289px;top:52px" width="42" height="42" viewBox="0 0 42 42">
<path d="M5 21 L10 19 L12 22Z" fill="#3a3a3a"/><path d="M10 18 Q16 11 22 15 L23 23 Q16 25 10 22Z" fill="#7a2a80"/><path d="M14 14 Q19 12 22 15 L21 18Z" fill="#9a4aa0"/>
<circle cx="29" cy="22" r="6.5" fill="#1e4a68"/><circle cx="27.5" cy="20" r="3.5" fill="#2e6a90"/><path d="M16 24 L22 23" stroke="#d0d0d0" stroke-width="1"/>
</svg>
<div class="a" style="left:213px;top:52px;width:13px;height:13px;background:#3a8cc4;border:1px solid #22303a"><svg class="a" style="left:1px;top:1px" width="9" height="9" viewBox="0 0 9 9"><path d="M4.5 0.5 V8.5 M0.5 4.5 H8.5" stroke="#f4f8fc" stroke-width="1.8"/></svg></div>
<div class="a" style="left:266px;top:52px;width:13px;height:13px;background:#3a8cc4;border:1px solid #22303a"><svg class="a" style="left:1px;top:1px" width="9" height="9" viewBox="0 0 9 9"><path d="M4.5 0.5 V8.5 M0.5 4.5 H8.5" stroke="#f4f8fc" stroke-width="1.8"/></svg></div>
<div class="a" style="left:319px;top:52px;width:13px;height:13px;background:#3a8cc4;border:1px solid #22303a"><svg class="a" style="left:1px;top:1px" width="9" height="9" viewBox="0 0 9 9"><path d="M4.5 0.5 V8.5 M0.5 4.5 H8.5" stroke="#f4f8fc" stroke-width="1.8"/></svg></div>
<svg class="a" style="left:221px;top:67px" width="12" height="12" viewBox="0 0 12 12"><circle cx="6" cy="6" r="5.5" fill="#e0e0e0" stroke="#2c2c2c" stroke-width="1"/><path d="M4.5 3.5 L8.5 6 L4.5 8.5Z" fill="#2c2c2c"/></svg>
<svg class="a" style="left:273px;top:67px" width="12" height="12" viewBox="0 0 12 12"><circle cx="6" cy="6" r="5.5" fill="#e0e0e0" stroke="#2c2c2c" stroke-width="1"/><path d="M4.5 3.5 L8.5 6 L4.5 8.5Z" fill="#2c2c2c"/></svg>
<svg class="a" style="left:326px;top:67px" width="12" height="12" viewBox="0 0 12 12"><circle cx="6" cy="6" r="5.5" fill="#e0e0e0" stroke="#2c2c2c" stroke-width="1"/><path d="M4.5 3.5 L8.5 6 L4.5 8.5Z" fill="#2c2c2c"/></svg>
<div class="t" style="left:122px;width:60px;text-align:center;top:97px;color:#c8c8c8;font-size:7px">Scenes</div>
<div class="t" style="left:175px;width:60px;text-align:center;top:97px;color:#c8c8c8;font-size:7px">Hip Hop D...</div>
<div class="t" style="left:228px;width:60px;text-align:center;top:97px;color:#c8c8c8;font-size:7px">orangejuice</div>
<div class="t" style="left:280px;width:60px;text-align:center;top:97px;color:#c8c8c8;font-size:7px">sakicharac...</div>
</div>
</body></html>
